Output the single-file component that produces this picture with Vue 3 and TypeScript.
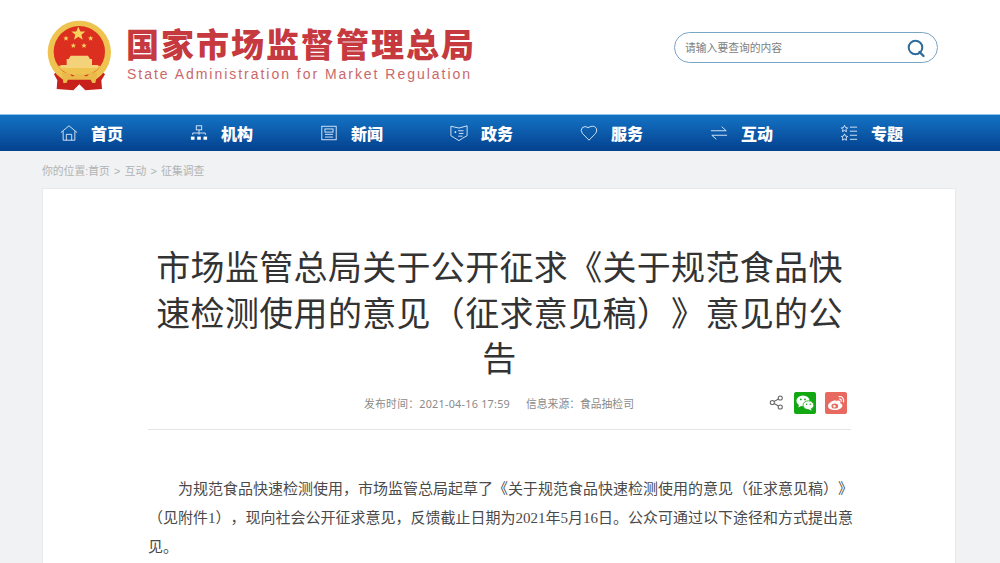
<template>
  <div class="page">
    <header class="top">
      <svg class="emblem" viewBox="0 0 240 240" aria-hidden="true">
        <path d="M52 168 L42 178 L52 196 L50 222 L100 226 L118 208 L136 226 L186 222 L184 196 L195 178 L184 168 Z" fill="#c8211c" />
        <circle cx="118" cy="112" r="95" fill="#eec34f" />
        <circle cx="118" cy="110" r="77" fill="#dd2f20" />
        <path d="M42 124 Q50 176 118 184 Q186 176 194 124 L186 152 L50 152 Z" fill="#eec34f" />
        <path v-for="s in stars" :key="s" :transform="s" d="M0 -8 L2.4 -2.5 L8 -2.5 L3.6 1.2 L5 7 L0 3.6 L-5 7 L-3.6 1.2 L-8 -2.5 L-2.4 -2.5 Z" fill="#f6d35c" />
        <path d="M92 122 H144 L150 132 H156 V150 H80 V132 H86 Z" fill="#f3d27a" />
        <rect x="62" y="150" width="112" height="9" fill="#f3d27a" />
        <path d="M66 174 Q88 166 96 186 Q118 166 140 186 Q150 166 172 174 L166 204 H70 Z" fill="#e9b94a" />
        <path d="M84 194 H152 L164 218 H140 L118 206 L96 218 H72 Z" fill="#c8211c" />
      </svg>
      <div class="brand">
        <div class="brand-cn">国家市场监督管理总局</div>
        <div class="brand-en">State Administration for Market Regulation</div>
      </div>
      <div class="search">
        <span class="search-text">请输入要查询的内容</span>
        <svg class="search-icon" viewBox="0 0 20 20" aria-hidden="true">
          <circle cx="9.5" cy="9.5" r="6.8" fill="none" stroke="#2e6c9c" stroke-width="2" />
          <path d="M13.5 14 L17.5 18" stroke="#2e6c9c" stroke-width="2.4" stroke-linecap="round" />
        </svg>
      </div>
    </header>

    <nav class="nav">
      <a v-for="item in navItems" :key="item.label" class="nav-item">
        <svg class="nav-icon" viewBox="0 0 20 20" aria-hidden="true">
          <g fill="none" stroke="#e3eefa" stroke-width="1">
            <template v-if="item.icon === 'home'">
              <path d="M1 9.5 L10 2 L19 9.5" />
              <path d="M3.5 8 V18 H16.5 V8" />
              <path d="M7 18 V11.5 H13 V18" />
            </template>
            <template v-else-if="item.icon === 'org'">
              <rect x="7" y="2" width="6" height="4.5" />
              <path d="M10 6.5 V12 M3 12 V10 H17 V12" />
              <rect x="1" y="14" width="4" height="3.5" fill="#fff" stroke="none" />
              <rect x="8" y="14" width="4" height="3.5" fill="#fff" stroke="none" />
              <rect x="15" y="14" width="4" height="3.5" fill="#fff" stroke="none" />
            </template>
            <template v-else-if="item.icon === 'news'">
              <rect x="2" y="2.5" width="16" height="15" />
              <rect x="5.5" y="5.5" width="9" height="3.5" />
              <path d="M5.5 11.5 H14.5 M5.5 14.5 H14.5" />
            </template>
            <template v-else-if="item.icon === 'gov'">
              <path d="M1 2.5 L10 4.5 L19 2 V13 Q14 15.5 10 18.5 Q5 15.5 1 13 Z" />
              <path d="M9 7.5 H15 M10 10.5 H15 M9 13.5 H14" />
              <circle cx="6" cy="9" r="1" fill="#fff" stroke="none" />
            </template>
            <template v-else-if="item.icon === 'heart'">
              <path d="M10 18 L2.6 10.4 Q0 7 2.6 4 Q5.6 1.6 9 4 L12 2.8 Q16.5 1.6 18.2 5 Q19.4 8 17.4 10.4 Z" />
            </template>
            <template v-else-if="item.icon === 'swap'">
              <path d="M1 7.5 H18 L13 3" />
              <path d="M19 12.5 H2 L7 17" />
            </template>
            <template v-else>
              <path d="M5 1.5 L6.2 4 L8.5 4.3 L6.8 6 L7.2 8.5 L5 7.3 L2.8 8.5 L3.2 6 L1.5 4.3 L3.8 4 Z" />
              <path d="M5 11 L6.2 13.5 L8.5 13.8 L6.8 15.5 L7.2 18 L5 16.8 L2.8 18 L3.2 15.5 L1.5 13.8 L3.8 13.5 Z" />
              <path d="M11 3.5 H19 M11 8 H19 M11 12.5 H19 M11 17 H19" />
            </template>
          </g>
        </svg>
        <span>{{ item.label }}</span>
      </a>
    </nav>

    <div class="crumbs">你的位置:首页 &gt; 互动 &gt; 征集调查</div>

    <main class="card">
      <h1 class="title">市场监管总局关于公开征求《关于规范食品快速检测使用的意见（征求意见稿）》意见的公告</h1>
      <div class="meta">
        <span class="meta-time">发布时间：2021-04-16 17:59</span>
        <span class="meta-source">信息来源：食品抽检司</span>
        <div class="share">
          <svg class="share-icon" viewBox="0 0 16 16" aria-hidden="true">
            <g fill="none" stroke="#666" stroke-width="1.1">
              <circle cx="3.5" cy="8" r="2.2" />
              <circle cx="12" cy="3.2" r="2.2" />
              <circle cx="12" cy="12.8" r="2.2" />
              <path d="M5.4 6.9 L10.1 4.3 M5.4 9.1 L10.1 11.7" />
            </g>
          </svg>
          <span class="badge badge-wechat">
            <svg viewBox="0 0 22 22" aria-hidden="true">
              <ellipse cx="9" cy="8.8" rx="6.6" ry="5.4" fill="#fff" />
              <path d="M5 12 L4.4 15.6 L8 13.4 Z" fill="#fff" />
              <ellipse cx="14.4" cy="13.2" rx="5.4" ry="4.4" fill="#fff" stroke="#12a812" stroke-width="0.8" />
              <path d="M16.6 16.4 L17.8 18.8 L14.6 17.2 Z" fill="#fff" />
              <circle cx="6.8" cy="7.4" r="0.9" fill="#12a812" />
              <circle cx="11" cy="7.4" r="0.9" fill="#12a812" />
              <circle cx="12.6" cy="12.2" r="0.7" fill="#12a812" />
              <circle cx="16.2" cy="12.2" r="0.7" fill="#12a812" />
            </svg>
          </span>
          <span class="badge badge-weibo">
            <svg viewBox="0 0 22 22" aria-hidden="true">
              <path d="M9.6 8.4 C6 9 3 11.6 3 14 C3 16.6 6.4 18 10 18 C14 18 17.4 15.8 17.4 13.4 C17.4 12 16 11.4 15.2 11.2 C15.8 9.6 15 8.4 13 8.6 C12 8.7 11.4 9.2 10.8 9.4 C11 8.6 10.6 8.2 9.6 8.4 Z" fill="#fff" />
              <ellipse cx="9.8" cy="14" rx="3.4" ry="2.6" fill="#e8695f" />
              <circle cx="9.4" cy="14.2" r="1.2" fill="#fff" />
              <path d="M14 4.6 C17 4 19.4 6.6 18.4 10 M14.4 7 C15.8 6.8 16.6 8 16.2 9.4" fill="none" stroke="#fff" stroke-width="1.1" stroke-linecap="round" />
            </svg>
          </span>
        </div>
      </div>
      <p class="body-text">为规范食品快速检测使用，市场监管总局起草了《关于规范食品快速检测使用的意见（征求意见稿）》（见附件1），现向社会公开征求意见，反馈截止日期为2021年5月16日。公众可通过以下途径和方式提出意见。</p>
    </main>
  </div>
</template>

<script setup lang="ts">
type NavIcon = 'home' | 'org' | 'news' | 'gov' | 'heart' | 'swap' | 'topic'

const navItems: { label: string; icon: NavIcon }[] = [
  { label: '首页', icon: 'home' },
  { label: '机构', icon: 'org' },
  { label: '新闻', icon: 'news' },
  { label: '政务', icon: 'gov' },
  { label: '服务', icon: 'heart' },
  { label: '互动', icon: 'swap' },
  { label: '专题', icon: 'topic' },
]

const stars = [
  'translate(115 56) scale(2.6)',
  'translate(78 70)',
  'translate(152 70)',
  'translate(100 92)',
  'translate(132 92)',
]
</script>

<style>
html,
body {
  margin: 0;
  overflow: hidden;
  background: #f1f2f3;
}
</style>

<style scoped>
.page {
  width: 1000px;
  height: 563px;
  overflow: hidden;
  background: #f1f2f3;
  font-family: "Liberation Sans", "Noto Sans CJK SC", sans-serif;
  text-spacing-trim: space-all;
}

.top {
  height: 114px;
  display: flex;
  align-items: flex-start;
  padding-left: 40px;
  background: #fff;
}

.emblem {
  width: 80px;
  height: 80px;
  margin-top: 15px;
  flex-shrink: 0;
}

.brand {
  margin: 25px 0 0 6px;
  display: flex;
  flex-direction: column;
}

.brand-cn {
  font-size: 33px;
  line-height: 42px;
  font-weight: 900;
  letter-spacing: 2px;
  color: #c5393f;
  white-space: nowrap;
}

.brand-en {
  font-size: 14px;
  line-height: 18px;
  letter-spacing: 1.97px;
  margin: -2px 0 0 1px;
  color: #c9686b;
  white-space: nowrap;
}

.search {
  margin: 32px 62px 0 auto;
  width: 264px;
  height: 31px;
  box-sizing: border-box;
  display: flex;
  align-items: center;
  justify-content: space-between;
  padding: 0 11px 0 10px;
  border: 1px solid #7ba5c4;
  border-radius: 16px;
}

.search-text {
  font-size: 10.8px;
  margin-bottom: 2px;
  color: #808080;
}

.search-icon {
  width: 20px;
  height: 20px;
}

.nav {
  height: 37px;
  display: grid;
  grid-template-columns: repeat(7, 130px);
  padding-left: 60px;
  border-top: 1px solid #8cc4ea;
  box-sizing: border-box;
  background: linear-gradient(#1473c4, #04418f);
}

.nav-item {
  display: flex;
  align-items: center;
  gap: 13px;
  color: #fff;
  font-size: 16px;
  font-weight: 900;
}

.nav-icon {
  width: 18px;
  height: 18px;
  flex-shrink: 0;
}

.crumbs {
  height: 37px;
  display: flex;
  align-items: center;
  padding-left: 42px;
  font-size: 10.8px;
  word-spacing: 1.3px;
  color: #b0b2b4;
}

.card {
  width: 914px;
  margin-left: 42px;
  box-sizing: border-box;
  padding: 57px 104px 0 105px;
  height: 500px;
  background: #fff;
  border: 1px solid #e8e9ea;
}

.title {
  margin: 0 0 -1px;
  font-size: 34px;
  line-height: 45.5px;
  font-weight: 400;
  letter-spacing: .32px;
  text-align: center;
  color: #333;
}

.meta {
  height: 42px;
  display: flex;
  align-items: center;
  padding-left: 216px;
  border-bottom: 1px solid #e4e5e6;
  padding-bottom: 5px;
  font-size: 10.8px;
  color: #8a8a8a;
}

.meta-time {
  font-family: "Noto Sans", "Noto Sans CJK SC", sans-serif;
  letter-spacing: .25px;
}

.meta-source {
  margin-left: 16px;
}

.share {
  margin-left: auto;
  margin-right: 4px;
  display: flex;
  align-items: center;
}

.share-icon {
  width: 15px;
  height: 15px;
  margin-right: 10px;
}

.badge {
  width: 22px;
  height: 22px;
  border-radius: 2px;
}

.badge svg {
  display: block;
  width: 22px;
  height: 22px;
}

.badge-wechat {
  background: #12a812;
}

.badge-weibo {
  margin-left: 9px;
  background: #e8695f;
}

.body-text {
  margin: 45px -2px 0 0;
  font-family: "Liberation Serif", "Noto Sans CJK SC", serif;
  font-size: 15px;
  line-height: 29px;
  text-indent: 2em;
  color: #4a4a4a;
}
</style>
